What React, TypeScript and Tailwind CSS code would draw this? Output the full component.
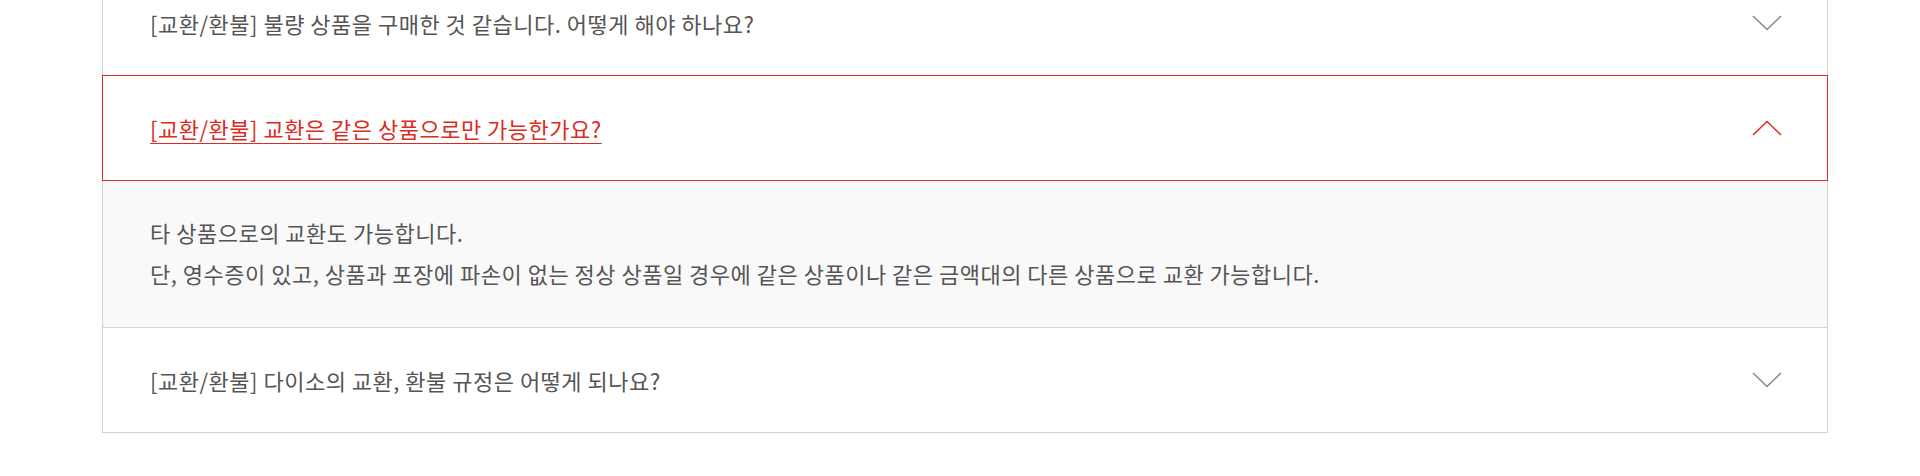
import { useState } from "react";

type Faq = { id: number; category: string; question: string; answer?: string[] };

const faqs: Faq[] = [
  { id: 1, category: "교환/환불", question: "불량 상품을 구매한 것 같습니다. 어떻게 해야 하나요?" },
  {
    id: 2,
    category: "교환/환불",
    question: "교환은 같은 상품으로만 가능한가요?",
    answer: [
      "타 상품으로의 교환도 가능합니다.",
      "단, 영수증이 있고, 상품과 포장에 파손이 없는 정상 상품일 경우에 같은 상품이나 같은 금액대의 다른 상품으로 교환 가능합니다.",
    ],
  },
  { id: 3, category: "교환/환불", question: "다이소의 교환, 환불 규정은 어떻게 되나요?" },
];

function Chevron({ up }: { up: boolean }) {
  return (
    <svg width="30" height="16" viewBox="0 0 30 16" fill="none" className="shrink-0">
      {up ? (
        <path d="M1 15L15 1.5L29 15" stroke="#dc2b22" strokeWidth="1.5" />
      ) : (
        <path d="M1 1L15 14.5L29 1" stroke="#888888" strokeWidth="1.5" />
      )}
    </svg>
  );
}

export default function App() {
  const [open, setOpen] = useState<number | null>(2);

  return (
    <div
      className="h-[476px] w-full overflow-hidden bg-white"
      style={{ fontFamily: '"Noto Sans CJK KR", "Noto Sans", sans-serif' }}
    >
      <ul className="-mt-[30px] ml-[102px] w-[1726px]">
        {faqs.map((f, i) => {
          const active = open === f.id;
          return (
            <li key={f.id} className={i > 0 ? "-mt-px" : ""}>
              <button
                type="button"
                onClick={() => setOpen(active ? null : f.id)}
                className={
                  active
                    ? "relative z-10 flex h-[106px] w-full items-center justify-between border border-[#dc2b22] bg-white pl-[47px] pr-[45px] text-left"
                    : "relative flex h-[106px] w-full items-center justify-between border border-[#d2d2d2] bg-white pl-[47px] pr-[45px] text-left"
                }
              >
                <span
                  className={
                    active
                      ? "text-[22px] tracking-[0.5px] text-[#dc2b22] underline decoration-1 underline-offset-[5px]"
                      : "text-[22px] tracking-[0.5px] text-[#555555]"
                  }
                >
                  [{f.category}] {f.question}
                </span>
                <Chevron up={active} />
              </button>
              {active && f.answer ? (
                <div className="border-x border-[#d2d2d2] bg-[#f9f9f9] pl-[47px] pt-[31px] pb-[34px] text-[22px] leading-[41px] tracking-[0.5px] text-[#555555]">
                  {f.answer.map((line) => (
                    <p key={line}>{line}</p>
                  ))}
                </div>
              ) : null}
            </li>
          );
        })}
      </ul>
    </div>
  );
}
